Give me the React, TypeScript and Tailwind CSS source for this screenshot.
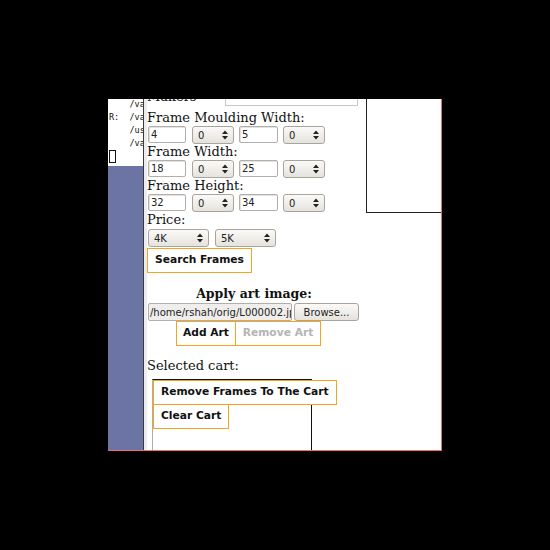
import React from 'react';

const serif = { fontFamily: '"DejaVu Serif", serif' };

const Arrows: React.FC = () => (
  <svg width="6" height="10" viewBox="0 0 6 10" className="shrink-0">
    <polygon points="0,4 3,0.5 6,4" fill="#222" />
    <polygon points="0,6 3,9.5 6,6" fill="#222" />
  </svg>
);

const Select: React.FC<{ value: string; w: string }> = ({ value, w }) => (
  <div className={`${w} h-[18px] flex items-center justify-between pl-[5px] pr-[5px] border border-[#a9a59d] rounded-[3px] bg-gradient-to-b from-[#fbfaf8] to-[#e6e3dd] text-[10px] text-[#222]`}>
    <span>{value}</span>
    <Arrows />
  </div>
);

const TextBox: React.FC<{ value: string; w: string }> = ({ value, w }) => (
  <div className={`${w} h-[17px] flex items-center pl-[2px] border border-[#b3afa8] rounded-[2px] bg-white text-[10px] text-[#222] shadow-[inset_1px_1px_0_#e4e2de]`}>
    {value}
  </div>
);

const Label: React.FC<{ text: string }> = ({ text }) => (
  <div className="h-[17px] leading-[17px] text-[13px] text-[#111] whitespace-nowrap" style={serif}>
    {text}
  </div>
);

const SizeRow: React.FC<{ a: string; b: string }> = ({ a, b }) => (
  <div className="h-[17px] flex items-start ml-[1px]">
    <TextBox value={a} w="w-[38px]" />
    <div className="ml-[6px]"><Select value="0" w="w-[42px]" /></div>
    <div className="ml-[5px]"><TextBox value={b} w="w-[39px]" /></div>
    <div className="ml-[5px]"><Select value="0" w="w-[42px]" /></div>
  </div>
);

const OrangeButton: React.FC<{ text: string; className?: string; disabled?: boolean }> = ({ text, className = '', disabled }) => (
  <div
    className={`h-[25px] flex items-center justify-center px-[7px] border border-[#f4a51c] bg-white text-[10.7px] font-bold whitespace-nowrap ${disabled ? 'text-[#b4b4b4]' : 'text-[#111]'} ${className}`}
  >
    {text}
  </div>
);

const App: React.FC = () => {
  return (
    <div className="w-[550px] h-[550px] bg-black pl-[108px] pt-[99px]" style={{ fontFamily: '"DejaVu Sans", sans-serif' }}>
      <div className="w-[334px] h-[352px] flex bg-white border-r border-b border-[#f26c6c] overflow-hidden">
        {/* Left: terminal + blue panel */}
        <div className="w-[35px] shrink-0 flex flex-col">
          <div className="h-[67px] bg-white overflow-hidden">
            <div
              className="-mt-[1px] pl-[1px] text-[8.5px] leading-[13px] whitespace-pre text-[#111]"
              style={{ fontFamily: '"DejaVu Sans Mono", monospace' }}
            >
              <div>{'    /va'}</div>
              <div>{'R:  /va'}</div>
              <div>{'    /us'}</div>
              <div>{'    /va'}</div>
              <div className="h-[13px] flex items-center">
                <div className="w-[7px] h-[13px] border border-[#111]" />
              </div>
            </div>
          </div>
          <div className="flex-1 bg-[#6b74a3]" />
        </div>
        <div className="w-[1px] shrink-0 bg-[#3a3a3a]" />
        <div className="w-[3px] shrink-0 bg-[#ececec]" />

        {/* Content */}
        <div className="flex-1 flex overflow-hidden">
          <div className="w-[219px] shrink-0 flex flex-col">
            <div className="-mt-[12px] h-[22px] flex items-start">
              <div className="mt-[1px] w-[78px]"><Label text="Makers" /></div>
              <div className="mt-[1px] w-[133px] h-[18px] border border-[#c9c6c0]" />
            </div>

            <Label text="Frame Moulding Width:" />
            <SizeRow a="4" b="5" />
            <Label text="Frame Width:" />
            <SizeRow a="18" b="25" />
            <Label text="Frame Height:" />
            <SizeRow a="32" b="34" />
            <Label text="Price:" />
            <div className="mt-[1px] h-[18px] flex ml-[1px]">
              <Select value="4K" w="w-[61px]" />
              <div className="ml-[6px]"><Select value="5K" w="w-[61px]" /></div>
            </div>
            <div className="mt-[1px] flex">
              <OrangeButton text="Search Frames" />
            </div>

            <div className="mt-[12px] w-[212px] ml-[1px] h-[17px] leading-[17px] text-center text-[12.5px] font-bold text-[#111]" style={serif}>
              Apply art image:
            </div>
            <div className="mt-[1px] ml-[1px] h-[18px] flex">
              <div className="w-[144px] h-[18px] border border-[#b3afa8] rounded-[2px] bg-[#efeeec] overflow-hidden flex items-center pl-[1px] text-[10px] text-[#222] whitespace-nowrap">
                /home/rshah/orig/L000002.jpg
              </div>
              <div className="ml-[2px] w-[65px] h-[18px] border border-[#a9a59d] rounded-[3px] bg-gradient-to-b from-[#fbfaf8] to-[#e6e3dd] flex items-center justify-center text-[10px] text-[#222]">
                Browse...
              </div>
            </div>
            <div className="ml-[29px] flex">
              <OrangeButton text="Add Art" className="w-[60px]" />
              <OrangeButton text="Remove Art" className="w-[85px] border-l-0" disabled />
            </div>

            <div className="mt-[11px]"><Label text="Selected cart:" /></div>

            <div className="mt-[5px] ml-[5px] w-[160px] flex-1 border-t border-r border-l border-t-[#111] border-r-[#111] border-l-[#adadad]">
              <OrangeButton text="Remove Frames To The Cart" className="w-max" />
              <OrangeButton text="Clear Cart" className="w-max -mt-[1px]" />
            </div>
          </div>

          <div className="flex-1 h-[114px] border-l border-b border-[#222]" />
        </div>
      </div>
    </div>
  );
};

export default App;
